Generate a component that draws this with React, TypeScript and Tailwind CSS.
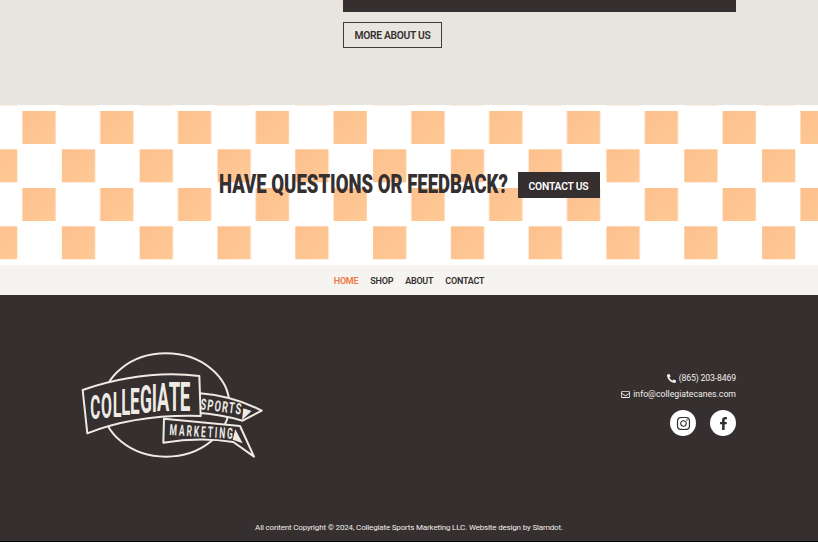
import React from "react";
import { FaFacebookF, FaInstagram, FaPhoneAlt, FaRegEnvelope } from "react-icons/fa";

const navItems = ["HOME", "SHOP", "ABOUT", "CONTACT"];

// letter positions of the logo word, it grows towards the right
const collegiate = [
  { c: "C", x: 91, y: 238, s: 100 },
  { c: "O", x: 123, y: 234, s: 103 },
  { c: "L", x: 158, y: 230, s: 106 },
  { c: "L", x: 184, y: 226, s: 109 },
  { c: "E", x: 210, y: 222, s: 112 },
  { c: "G", x: 240, y: 219, s: 114 },
  { c: "I", x: 275, y: 217, s: 117 },
  { c: "A", x: 291, y: 214, s: 119 },
  { c: "T", x: 326, y: 213, s: 121 },
  { c: "E", x: 359, y: 212, s: 123 },
];

const Logo: React.FC = () => (
  <svg viewBox="0 0 660 390" className="h-[130px] w-[220px] shrink-0" fill="none">
    <ellipse cx="318" cy="195" rx="190" ry="155" stroke="#eeebe4" strokeWidth="6" />
    <path
      d="M312 236 L540 258 L582 350 L520 306 Q420 290 310 308 Z"
      fill="#352f30"
      stroke="#eeebe4"
      strokeWidth="6"
      strokeLinejoin="round"
    />
    <path
      d="M420 160 Q520 168 605 212 L548 242 Q480 222 410 218 Z"
      fill="#352f30"
      stroke="#eeebe4"
      strokeWidth="6"
      strokeLinejoin="round"
    />
    <path d="M550 205 L575 213 L546 240 Z" fill="#eeebe4" />
    <path d="M526 268 L548 310 L518 299 Z" fill="#eeebe4" />
    <path
      d="M68 150 Q250 88 418 108 L422 228 Q230 222 82 280 Z"
      fill="#352f30"
      stroke="#eeebe4"
      strokeWidth="6"
      strokeLinejoin="round"
    />
    <g transform="scale(0.46 1)">
      <text fill="#eeebe4" fontFamily="Roboto, sans-serif" fontWeight="700">
        {collegiate.map((l, i) => (
          <tspan key={i} x={l.x / 0.46} y={l.y} fontSize={l.s}>
            {l.c}
          </tspan>
        ))}
      </text>
    </g>
    <g transform="rotate(7 420 208) translate(420 208) scale(0.6 1)">
      <text
        fill="#eeebe4"
        fontFamily="Roboto, sans-serif"
        fontWeight="700"
        fontSize="46"
        textLength="205"
        lengthAdjust="spacing"
      >
        SPORTS
      </text>
    </g>
    <g transform="rotate(3.5 328 285) translate(328 285) scale(0.55 1)">
      <text
        fill="#eeebe4"
        fontFamily="Roboto, sans-serif"
        fontWeight="700"
        fontSize="46"
        textLength="345"
        lengthAdjust="spacing"
      >
        MARKETING
      </text>
    </g>
  </svg>
);

const App: React.FC = () => {
  return (
    <div className="flex h-[542px] w-[818px] flex-col overflow-hidden bg-black font-['Roboto',sans-serif]">
      <section className="h-[105px] shrink-0 bg-[#e8e5df] pl-[343px]">
        <div className="h-3 w-[393px] bg-[#352f30]" />
        <button className="mt-2.5 flex h-[26px] w-[99px] items-center justify-center border-[1.5px] border-[#3f3a3b] pt-0.5 text-[10.3px] font-semibold tracking-[-0.3px] text-[#352f30]">
          MORE ABOUT US
        </button>
      </section>

      <section className="relative flex h-[160px] shrink-0 items-center justify-center bg-white">
        <svg className="absolute inset-0 h-full w-full">
          <defs>
            <linearGradient id="sq" x1="0" y1="0" x2="1" y2="1">
              <stop offset="0" stopColor="#fdc08d" />
              <stop offset="1" stopColor="#fec996" />
            </linearGradient>
            <pattern id="checks" width="77.8" height="77" y="1" patternUnits="userSpaceOnUse">
              <rect x="22.4" y="5" width="33.2" height="33" fill="url(#sq)" />
              <rect x="61.9" y="43.3" width="33.2" height="33" fill="url(#sq)" />
              <rect x="-15.9" y="43.3" width="33.2" height="33" fill="url(#sq)" />
            </pattern>
          </defs>
          <rect width="100%" height="100%" fill="url(#checks)" />
        </svg>
        <div className="relative flex items-center gap-[11px]">
          <div className="h-[25px] w-[288px]">
            <h2 className="-mt-px origin-left scale-x-[0.741] text-[25px] leading-none font-black whitespace-nowrap text-[#352f30]">
              HAVE QUESTIONS OR FEEDBACK?
            </h2>
          </div>
          <button className="flex h-[26px] w-[82px] items-center justify-center bg-[#352f30] pt-1 text-[10.3px] font-semibold tracking-[-0.2px] text-white">
            CONTACT US
          </button>
        </div>
      </section>

      <nav className="flex h-[30px] shrink-0 items-center justify-center gap-3 bg-[#f5f4f0] pt-1 text-[9px] font-semibold tracking-[-0.25px] text-[#352f30]">
        {navItems.map((item) => (
          <a key={item} className={item === "HOME" ? "text-[#f0763f]" : ""}>
            {item}
          </a>
        ))}
      </nav>

      <footer className="flex h-[246px] shrink-0 flex-col bg-[#352f30] pr-[82px] pl-[60px] text-[#f0eee9]">
        <div className="mt-[45px] flex items-start justify-between">
          <Logo />
          <div className="mt-[31px] flex flex-col items-end text-[8.7px]">
            <div className="flex h-[15px] items-center gap-[3px]">
              <FaPhoneAlt className="size-[9px]" />
              <span className="tracking-[-0.15px]">(865) 203-8469</span>
            </div>
            <div className="mt-px flex h-[15px] items-center gap-[3px]">
              <FaRegEnvelope className="size-[9px]" />
              <span>info@collegiatecanes.com</span>
            </div>
            <div className="mt-2 flex gap-3.5">
              <span className="flex size-[26px] items-center justify-center rounded-full bg-white text-[#352f30]">
                <FaInstagram className="size-[15px]" />
              </span>
              <span className="flex size-[26px] items-center justify-center rounded-full bg-white text-[#352f30]">
                <FaFacebookF className="size-[13px]" />
              </span>
            </div>
          </div>
        </div>
        <p className="mt-auto mr-[-82px] ml-[-60px] pb-[7px] text-center text-[8px] tracking-[-0.17px] text-[#f0eee9]">
          All content Copyright © 2024, Collegiate Sports Marketing LLC. Website design by Slamdot.
        </p>
      </footer>
    </div>
  );
};

export default App;
